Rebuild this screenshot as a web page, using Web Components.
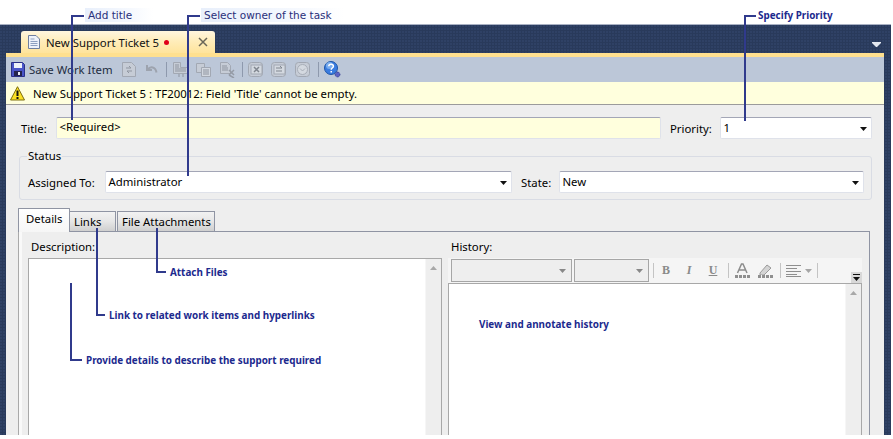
<!DOCTYPE html>
<html>
<head>
<meta charset="utf-8">
<title>New Support Ticket</title>
<style>
    html, body { margin: 0; background: #fff; }
    body { font: 11.35px "Noto Sans", sans-serif; color: #000; }
    #stage { position: relative; width: 891px; height: 435px; overflow: hidden; }
</style>
</head>
<body>
<div id="stage">
    <ticket-window>
        <doc-tab>New Support Ticket 5</doc-tab>
        <work-toolbar></work-toolbar>
        <warn-bar>New Support Ticket 5 : TF20012: Field 'Title' cannot be empty.</warn-bar>
        <ticket-form></ticket-form>
    </ticket-window>

    <call-out kind="down" plain shade="65" style="left:71px;top:15px;width:13px;height:105px">Add title</call-out>
    <call-out kind="down" plain shade="140" style="left:187px;top:15px;width:13px;height:161px">Select owner of the task</call-out>
    <call-out kind="down" style="left:744px;top:15px;width:12px;height:106px;--gap:2px">Specify Priority</call-out>
    <call-out kind="line" style="left:96px;top:228px;width:9px;height:88px">Link to related work items and hyperlinks</call-out>
    <call-out kind="line" style="left:156px;top:228px;width:10px;height:45px">Attach Files</call-out>
    <call-out kind="line" style="left:70px;top:283px;width:12px;height:78px">Provide details to describe the support required</call-out>
    <call-out kind="text" style="left:479px;top:317px">View and annotate history</call-out>
</div>

<script>
// one helper, every element just clones its own template
function montar(el, html) {
    const t = document.createElement('template');
    t.innerHTML = html;
    el.attachShadow({ mode: 'open' });
    el.shadowRoot.appendChild(t.content.cloneNode(true));
}

class TicketWindow extends HTMLElement {
    constructor() {
        super();
        montar(this, `
        <style>
            :host{ display:flex; flex-direction:column; height:435px; }
            .top{ height:24px; background:#fff; border-bottom:1px solid #a9b1c3; flex:none; }
            .navy{
                flex:1; display:flex; flex-direction:column; min-height:0;
                padding:0 7px 0 6px;
                background-color:#293a5b;
                background-image:radial-gradient(circle at 1px 1px,#2f4165 1px,transparent 1.2px);
                background-size:3px 3px;
            }
        </style>
        <div class="top"></div>
        <div class="navy"><slot></slot></div>`);
    }
}

class DocTab extends HTMLElement {
    constructor() {
        super();
        montar(this, `
        <style>
            :host{ display:flex; height:28px; padding-left:15px; position:relative; flex:none; }
            .tab{
                margin-top:6px; width:194px; height:22px; box-sizing:border-box;
                display:flex; align-items:center; padding:0 0 0 7px;
                border-radius:3px 3px 0 0;
                background:linear-gradient(#fff6df,#ffedbb 45%,#ffe49c);
                color:#111;
            }
            .tab svg.doc{ margin-right:6px; flex:none; }
            .dot{ width:5px; height:5px; border-radius:50%; background:#e0001a; margin-left:5px; flex:none; }
            .x{ margin-left:auto; margin-right:7px; flex:none; }
            .more{ position:absolute; right:3px; top:17px; }
        </style>
        <div class="tab">
            <svg class="doc" width="12" height="14" viewBox="0 0 12 14"><path d="M.5.5h7.5l3.500 3.500v9.500h-11z" fill="#eef2fa" stroke="#6f7f9f"/><path d="M2.500 4h4M2.500 6.500h7M2.500 8.500h7M2.500 10.500h7" stroke="#8ea0c0"/></svg>
            <span><slot></slot></span>
            <span class="dot"></span>
            <svg class="x" width="10" height="10" viewBox="0 0 10 10"><path d="M1 1l8 8M9 1l-8 8" stroke="#6a6658" stroke-width="1.500"/></svg>
        </div>
        <svg class="more" width="9" height="5" viewBox="0 0 9 5"><path d="M0 0h9v1l-4 4h-1l-4-4z" fill="#e4e8f0"/></svg>`);
    }
}

class WorkToolbar extends HTMLElement {
    constructor() {
        super();
        const g = 'fill="#c6ccd6" stroke="#a2a8b3"';
        montar(this, `
        <style>
            :host{ display:flex; align-items:center; flex:none; box-sizing:border-box;
                   border-top:4px solid #ffe08f; height:29px; background:#bcc7d8; padding-left:5px; color:#222c40; }
            svg{ flex:none; display:block; }
            .sep{ width:1px; height:15px; background:#8e99ad; flex:none; }
            .lbl{ margin:0 12px 0 4px; width:81px; white-space:nowrap; }
        </style>
        <svg width="14" height="15" viewBox="0 0 14 15"><path d="M.5.500h11l2 2v12h-13z" fill="#4a55c8" stroke="#2a3088"/><rect x="3" y="1" width="8" height="5" fill="#eef1fa"/><rect x="3" y="9" width="8" height="5" fill="#23234e"/><rect x="7" y="10" width="2" height="3" fill="#e8ecf8"/></svg>
        <span class="lbl">Save Work Item</span>
        <svg width="14" height="15" viewBox="0 0 14 15"><path d="M.5.500h9l4 4v10h-13z" ${g}/><path d="M4 6h5M9 6l-2-2M10 9h-5M5 9l2 2" stroke="#8f95a0" fill="none"/></svg>
        <svg style="margin-left:10px" width="12" height="11" viewBox="0 0 12 11"><path d="M1 1v5h5M1.500 5.500c3-3.500 8-3 9 3" stroke="#9da3ae" stroke-width="2" fill="none"/></svg>
        <span class="sep" style="margin:0 6px 0 8px"></span>
        <svg width="15" height="16" viewBox="0 0 15 16"><path d="M.5.500h7v5h7v6h-14z" ${g}/><path d="M2 3h4M2 5h4M2 7h11M2 9h11M6 12v3M10 12v3" stroke="#8f95a0"/></svg>
        <svg style="margin-left:8px" width="15" height="14" viewBox="0 0 15 14"><path d="M.5.500h8v9h-8z" ${g}/><path d="M5.500 4.500h9v9h-9z" fill="#d2d7df" stroke="#a2a8b3"/><path d="M7 7h6M7 9h6M7 11h6" stroke="#8f95a0"/></svg>
        <svg style="margin-left:9px" width="15" height="16" viewBox="0 0 15 16"><path d="M.5.500h7l3 3v8h-10z" ${g}/><path d="M2 4h5M2 6h6M2 8h6" stroke="#8f95a0"/><path d="M9 8l5 5M14 8l-5 5M9 13l5 3" stroke="#959ba6" stroke-width="1.500"/></svg>
        <span class="sep" style="margin:0 5px 0 7px"></span>
        <svg width="15" height="15" viewBox="0 0 15 15"><rect x=".5" y=".5" width="14" height="14" rx="3" ${g}/><rect x="3" y="3" width="11" height="9" fill="#d4d9e0" stroke="#a2a8b3"/><path d="M6 5l5 5M11 5l-5 5" stroke="#80868f" stroke-width="1.500"/></svg>
        <svg style="margin-left:8px" width="15" height="15" viewBox="0 0 15 15"><rect x=".5" y=".5" width="14" height="14" rx="3" ${g}/><rect x="3" y="3" width="11" height="9" fill="#d4d9e0" stroke="#a2a8b3"/><path d="M5 6h6l-2-2M11 9h-6" stroke="#80868f" fill="none"/></svg>
        <svg style="margin-left:9px" width="15" height="15" viewBox="0 0 15 15"><rect x=".5" y=".5" width="14" height="14" rx="3" ${g}/><circle cx="7.500" cy="7.500" r="5" fill="#d4d9e0" stroke="#a8aeb8"/><path d="M5 6.500l2.500 2.500 2.500-2.500" stroke="#a8aeb8" fill="none"/></svg>
        <span class="sep" style="margin:0 5px 0 8px"></span>
        <svg width="17" height="17" viewBox="0 0 17 17"><circle cx="7" cy="7" r="6.500" fill="#3a7ce0" stroke="#1d55a8"/><circle cx="5.500" cy="4.500" r="3.500" fill="#a3cdf7" opacity=".6"/><path d="M4.800 5.300c0-2.800 4.600-2.800 4.600 0 0 1.700-2.200 1.700-2.200 3.400" stroke="#fff" stroke-width="1.500" fill="none"/><rect x="6.500" y="10" width="1.500" height="1.500" fill="#fff"/><circle cx="13.500" cy="13.500" r="2.400" fill="#5b63c4" stroke="#2e3490" stroke-dasharray="1 .6"/></svg>`);
    }
}

class WarnBar extends HTMLElement {
    constructor() {
        super();
        montar(this, `
        <style>
            :host{ display:flex; align-items:center; flex:none; height:23px; box-sizing:border-box;
                   background:#ffffdd; border-bottom:1px solid #9b9b9b; padding-left:4px; }
            svg{ margin-right:8px; flex:none; }
        </style>
        <svg width="15" height="15" viewBox="0 0 15 15"><path d="M7.500.7l7 13.300h-14z" fill="#fbe023" stroke="#7c6e10" stroke-linejoin="round"/><path d="M7.500 4.500v5.500" stroke="#111" stroke-width="2"/><rect x="6.500" y="11" width="2" height="2" fill="#111"/></svg>
        <span><slot></slot></span>`);
    }
}

class FieldBox extends HTMLElement {
    constructor() {
        super();
        montar(this, `
        <style>
            :host{ display:flex; align-items:center; height:22px; box-sizing:border-box; background:#fff;
                   border:1px solid #dfe2ea; border-top-color:#a3a6b6; border-radius:2px;
                   padding:0 0 1px 2.5px; position:relative; }
            :host([tint]){ background:#ffffdd; padding-bottom:3px; }
            svg{ display:none; position:absolute; right:4px; top:9px; }
            :host([arrow]) svg{ display:block; }
        </style>
        <slot></slot>
        <svg width="7" height="4" viewBox="0 0 7 4"><path d="M0 0h7l-3.500 4z" fill="#111"/></svg>`);
    }
}

class StatusGroup extends HTMLElement {
    constructor() {
        super();
        montar(this, `
        <style>
            :host{ display:block; box-sizing:border-box; height:44px; margin:17px 12px 0 13px; position:relative;
                   border:1px solid #d9dce4; border-radius:3px; }
            .legend{ position:absolute; left:7px; top:-9px; background:#eee; padding:0 1px; line-height:15px; }
            .row{ display:flex; align-items:center; padding:14px 7px 0 8px; }
        </style>
        <span class="legend">Status</span>
        <div class="row"><slot></slot></div>`);
    }
}

class FormTabs extends HTMLElement {
    constructor() {
        super();
        montar(this, `
        <style>
            :host{ display:flex; flex-direction:column; flex:1; min-height:0; margin:9px 14px 0 12px; }
            .strip{ display:flex; align-items:flex-end; height:23px; flex:none; position:relative; z-index:1; margin-bottom:-1px; }
            .t{ box-sizing:border-box; height:21px; display:flex; align-items:center; padding-left:4px;
                border:1px solid #8f94a3;
                background:linear-gradient(#f2f2f2,#e6e6e6 50%,#cfcfcf); }
            .sel{ width:52px; background:linear-gradient(#fff,#f6f6f6); border-bottom:0; padding:0 0 4px 7px; border-radius:1px 1px 0 0; height:24px; }
            .pane{ flex:1; min-height:0; box-sizing:border-box; border:1px solid #8f94a3; border-left-color:#a9a9a9; border-bottom:0;
                   box-shadow:inset 3px 0 #f9f9f9; padding-top:6px; }
        </style>
        <div class="strip">
            <span class="t sel">Details</span>
            <span class="t" style="width:46px;border-left:0;padding-left:4px">Links</span>
            <span class="t" style="width:98px;margin-left:1px;padding-left:4px">File Attachments</span>
        </div>
        <div class="pane"><slot></slot></div>`);
    }
}

class ScrollBox extends HTMLElement {
    constructor() {
        super();
        montar(this, `
        <style>
            :host{ display:flex; flex:1; min-height:0; background:#fff; box-sizing:border-box; border:1px solid #a8a8a8; border-bottom:0; }
            .body{ flex:1; }
            .bar{ width:16px; background:#eee; border-left:1px solid #f6f6f6; display:flex; justify-content:center; padding-top:7px; box-sizing:border-box; }
        </style>
        <div class="body"></div>
        <div class="bar"><svg width="7" height="4" viewBox="0 0 7 4"><path d="M3.500 0l3.500 4h-7z" fill="#a8a8a8"/></svg></div>`);
    }
}

class RichBar extends HTMLElement {
    constructor() {
        super();
        montar(this, `
        <style>
            :host{ display:flex; align-items:center; height:25px; flex:none; background:#f5f5f5; padding-left:3px; position:relative; box-sizing:border-box; }
            .c{ box-sizing:border-box; height:23px; border:1px solid #a6a6a6; background:#eee; position:relative; flex:none; }
            .c svg{ position:absolute; right:5px; top:9px; }
            .s{ width:1px; height:15px; background:#c4c4c4; flex:none; }
            .g{ font:bold 12px "Liberation Serif",serif; color:#8a8a8a; width:12px; text-align:center; flex:none; }
            svg{ flex:none; display:block; }
            .over{ position:absolute; right:0; bottom:0; width:11px; height:11px; background:#d8d8d8; display:flex; align-items:center; justify-content:center; }
        </style>
        <span class="c" style="width:121px"><svg width="7" height="4" viewBox="0 0 7 4"><path d="M0 0h7l-3.500 4z" fill="#888"/></svg></span>
        <span class="c" style="width:75px;margin-left:2px"><svg width="7" height="4" viewBox="0 0 7 4"><path d="M0 0h7l-3.500 4z" fill="#888"/></svg></span>
        <span class="s" style="margin-left:4px"></span>
        <span class="g" style="margin-left:6px">B</span>
        <span class="g" style="margin-left:11px;font-style:italic">I</span>
        <span class="g" style="margin-left:12px;text-decoration:underline">U</span>
        <span class="s" style="margin-left:9px"></span>
        <svg style="margin-left:6px" width="15" height="16" viewBox="0 0 15 16"><path d="M2.500 10l4-9h1.500l4 9M4.500 7h6" stroke="#8c8c8c" stroke-width="1.500" fill="none"/><path d="M0 12h15v3h-15z" fill="#8f8f8f"/><path d="M3.500 12v3M7.500 12v3M11.500 12v3" stroke="#f5f5f5"/></svg>
        <svg style="margin-left:8px" width="15" height="16" viewBox="0 0 15 16"><path d="M2 10l7-8 4 3-7 7h-4z" fill="#d4d4d4" stroke="#9a9a9a"/><path d="M0 12h15v3h-15z" fill="#8f8f8f"/><path d="M3.500 12v3M7.500 12v3M11.500 12v3" stroke="#f5f5f5"/></svg>
        <span class="s" style="margin-left:7px"></span>
        <svg style="margin-left:5px" width="15" height="12" viewBox="0 0 15 12"><path d="M0 .5h15M0 3.500h11M0 6.500h15M0 9.500h11M0 11.500h15" stroke="#8f8f8f"/></svg>
        <svg style="margin-left:4px" width="7" height="4" viewBox="0 0 7 4"><path d="M0 0h7l-3.500 4z" fill="#a6a6a6"/></svg>
        <span class="s" style="margin-left:5px"></span>
        <span class="over"><svg width="7" height="7" viewBox="0 0 7 7"><path d="M0 0h7v1h-7zM0 3h7l-3.500 4z" fill="#111"/></svg></span>`);
    }
}

class TicketForm extends HTMLElement {
    constructor() {
        super();
        montar(this, `
        <style>
            :host{ display:flex; flex-direction:column; flex:1; min-height:0; background:#eee; padding-top:12px; }
            .row{ display:flex; align-items:center; padding:0 12px 0 15px; }
            .cols{ display:grid; grid-template-columns:414px 414px; column-gap:6px; padding-left:9px; box-sizing:border-box; }
            .col{ display:flex; flex-direction:column; min-height:0; height:203px; }
            .cap{ height:19px; padding-top:1px; flex:none; padding-left:3px; line-height:16px; }
        </style>
        <div class="row">
            <span style="width:35px">Title:</span>
            <field-box tint style="flex:1">&lt;Required&gt;</field-box>
            <span style="width:50px;margin-left:9px">Priority:</span>
            <field-box arrow style="width:152px">1</field-box>
        </div>
        <status-group>
            <span style="width:77px">Assigned To:</span>
            <field-box arrow style="width:407px">Administrator</field-box>
            <span style="width:38px;margin-left:9px">State:</span>
            <field-box arrow style="width:305px">New</field-box>
        </status-group>
        <form-tabs>
            <div class="cols">
                <div class="col">
                    <div class="cap">Description:</div>
                    <scroll-box></scroll-box>
                </div>
                <div class="col">
                    <div class="cap">History:</div>
                    <rich-bar></rich-bar>
                    <scroll-box></scroll-box>
                </div>
            </div>
        </form-tabs>`);
    }
}

class CallOut extends HTMLElement {
    constructor() {
        super();
        montar(this, `
        <style>
            :host{ position:absolute; display:block; box-sizing:border-box; color:#1c2a8e;
                   font:bold 9.9px "Noto Sans",sans-serif; z-index:5; border-left:2px solid #303a8c; }
            :host([plain]){ font:10.5px "DejaVu Sans",sans-serif; color:#2a2f7a; }
            :host([kind=down]){ border-top:2px solid #303a8c; }
            :host([kind=line]){ border-bottom:2px solid #303a8c; }
            :host([kind=text]){ border:0; }
            .t{ position:absolute; left:calc(100% + var(--gap,4px)); white-space:nowrap; line-height:14px; }
            :host([kind=down]) .t{ top:-9px; }
            :host([kind=line]) .t{ bottom:-8px; }
            :host([kind=text]) .t{ position:static; }
        </style>
        <span class="t"><slot></slot></span>`);
        const shade = this.getAttribute('shade');
        if (shade) {
            const t = this.shadowRoot.querySelector('.t');
            t.style.width = shade + 'px';
            t.style.marginLeft = '-3px';
            t.style.paddingLeft = '3px';
            t.style.background = 'linear-gradient(90deg,#e8effb,#f6f9fe 70%,#fff)';
        }
    }
}

customElements.define('ticket-window', TicketWindow);
customElements.define('doc-tab', DocTab);
customElements.define('work-toolbar', WorkToolbar);
customElements.define('warn-bar', WarnBar);
customElements.define('field-box', FieldBox);
customElements.define('status-group', StatusGroup);
customElements.define('form-tabs', FormTabs);
customElements.define('scroll-box', ScrollBox);
customElements.define('rich-bar', RichBar);
customElements.define('ticket-form', TicketForm);
customElements.define('call-out', CallOut);
</script>
</body>
</html>
